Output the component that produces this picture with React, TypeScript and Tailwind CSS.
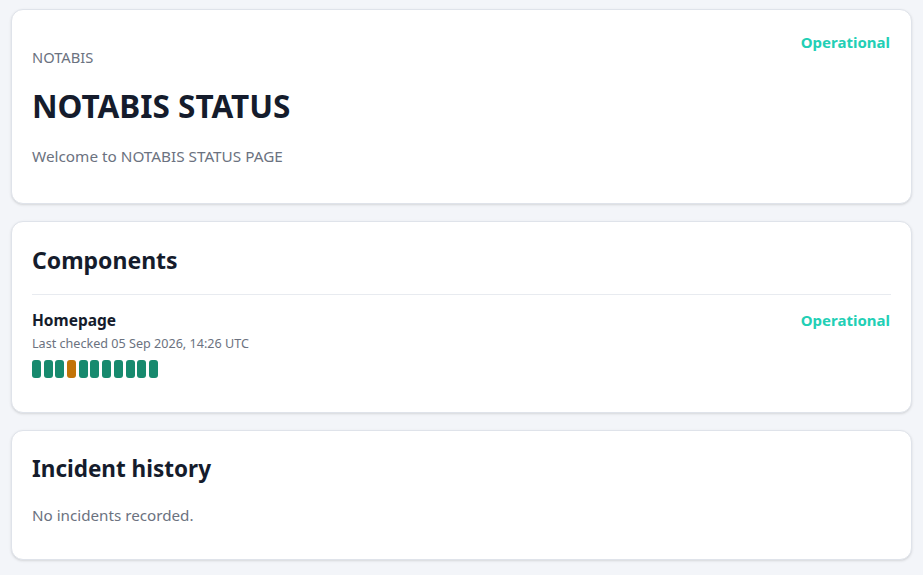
const bars = ['up', 'up', 'up', 'warn', 'up', 'up', 'up', 'up', 'up', 'up', 'up'];

export default function App() {
    return (
        <div
            className="min-h-screen bg-[#f3f5f9] px-[11px] pt-[9px] pb-4 flex flex-col gap-[17px] text-[#111827]"
            style={{ fontFamily: '"Noto Sans", "Open Sans", sans-serif' }}
        >
            {/* Header */}
            <div className="bg-white border border-[#dfe3ea] rounded-xl shadow-sm px-5 pt-[22px] pb-[37px] flex justify-between">
                <div>
                    <div className="mt-[15px] text-[14.7px] text-[#6b7280] leading-5">NOTABIS</div>
                    <h1 className="mt-[21px] text-[31.5px] font-bold leading-9 text-[#151c2c]">NOTABIS STATUS</h1>
                    <p className="mt-[22px] text-[15.3px] text-[#6b7280] leading-5">Welcome to NOTABIS STATUS PAGE</p>
                </div>
                <div className="text-[15px] font-bold text-[#22cfb5] leading-5 mr-px">Operational</div>
            </div>

            {/* Components */}
            <div className="bg-white border border-[#dfe3ea] rounded-xl shadow-sm px-5 pt-[22px] pb-[34px]">
                <h2 className="text-[23px] font-bold leading-8 text-[#151c2c]">Components</h2>
                <div className="mt-[18px] border-t border-[#e8ebf0]" />
                <div className="mt-[15px] flex justify-between">
                    <div>
                        <div className="text-[15.5px] font-bold leading-5 text-[#151c2c]">Homepage</div>
                        <div className="mt-[6px] text-[12.6px] text-[#6b7280] leading-4">Last checked 05 Sep 2026, 14:26 UTC</div>
                        <div className="mt-[8px] flex gap-[2.7px]">
                            {bars.map((b, i) => (
                                <div
                                    key={i}
                                    className={`w-[9px] h-[18px] rounded-[3px] ${b === 'warn' ? 'bg-[#c27408]' : 'bg-[#178a6e]'}`}
                                />
                            ))}
                        </div>
                    </div>
                    <div className="text-[15px] font-bold text-[#22cfb5] leading-5 mr-px">Operational</div>
                </div>
            </div>

            {/* Incident history */}
            <div className="bg-white border border-[#dfe3ea] rounded-xl shadow-sm px-5 pt-[22px] pb-[34px]">
                <h2 className="text-[22.5px] font-bold leading-8 text-[#151c2c]">Incident history</h2>
                <p className="mt-[20px] text-[15.2px] text-[#6b7280] leading-5">No incidents recorded.</p>
            </div>
        </div>
    );
}
